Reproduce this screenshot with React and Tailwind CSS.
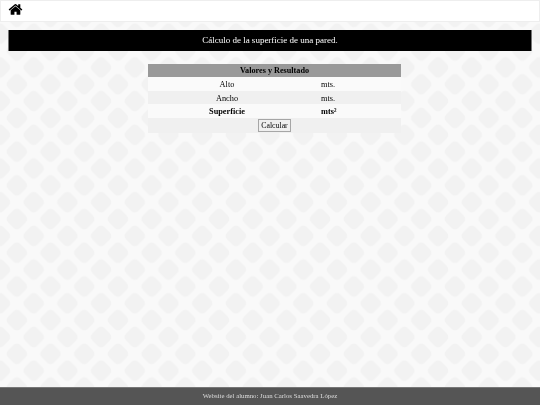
const serif = "font-['Liberation_Serif',serif]";

const Wallpaper = () => (
  <svg className="absolute -left-[3px] -top-[3px] w-[546px] h-[411px] blur-[0.5px]" aria-hidden="true">
    <defs>
      <pattern id="rombos" width="33.7" height="33.7" patternUnits="userSpaceOnUse" patternTransform="translate(3 3)">
        <rect width="33.7" height="33.7" fill="#f9f9f9" />
        <g fill="#f2f2f2">
          <rect x="8.35" y="8.35" width="17" height="17" rx="4.5" transform="rotate(45 16.85 16.85)" />
          <rect x="-8.5" y="-8.5" width="17" height="17" rx="4.5" transform="rotate(45 0 0)" />
          <rect x="25.2" y="-8.5" width="17" height="17" rx="4.5" transform="rotate(45 33.7 0)" />
          <rect x="-8.5" y="25.2" width="17" height="17" rx="4.5" transform="rotate(45 0 33.7)" />
          <rect x="25.2" y="25.2" width="17" height="17" rx="4.5" transform="rotate(45 33.7 33.7)" />
        </g>
      </pattern>
    </defs>
    <rect width="100%" height="100%" fill="url(#rombos)" />
  </svg>
);

const HomeIcon = () => (
  <svg viewBox="0 0 1792 1792" className="w-[15px] h-[15px] fill-black">
    <path d="M1472 992v480q0 26-19 45t-45 19h-384v-384h-256v384h-384q-26 0-45-19t-19-45v-480q0-1 .5-3t.5-3l575-474 575 474q1 2 1 6zm223-69l-62 74q-8 9-21 11h-3q-13 0-21-7l-692-577-692 577q-12 8-24 7-13-2-21-11l-62-74q-8-10-7-23.5t11-21.5l719-599q32-26 76-26t76 26l244 204v-195q0-14 9-23t23-9h192q14 0 23 9t9 23v408l219 182q10 8 11 21.5t-7 23.5z" />
  </svg>
);

const Row = ({ label, unit, bold, bg }) => (
  <div className={`grid grid-cols-[158px_1fr] h-[13.5px] pt-[2px] items-center text-[8.3px] text-black ${bg} ${bold ? "font-bold" : ""}`}>
    <span className="text-center">{label}</span>
    <span className="pl-[15px]">{unit}</span>
  </div>
);

export default function App() {
  return (
    <div className={`relative h-screen overflow-hidden flex flex-col blur-[0.3px] ${serif}`}>
      <Wallpaper />

      <header className="relative h-[22px] shrink-0 bg-white border border-[#eeeeee] pl-[6.5px] pt-[1.2px] flex items-start">
        <HomeIcon />
      </header>

      <h1 className="relative mt-[8px] mx-[8px] h-[21px] bg-black border-l border-r border-[#777777] text-white text-[9px] font-normal flex items-center justify-center">
        Cálculo de la superficie de una pared.
      </h1>

      <main className="relative mt-[12.5px] ml-[148px] w-[253px]">
        <div className="h-[13.5px] pt-[1px] bg-[#999999] text-[8.2px] font-bold text-black flex items-center justify-center">
          Valores y Resultado
        </div>
        <Row label="Alto" unit="mts." bg="bg-[#fafafa]" />
        <Row label="Ancho" unit="mts." bg="bg-[#f0f0f0]" />
        <Row label="Superficie" unit="mts²" bold bg="bg-[#fafafa]" />
        <div className="h-[15px] bg-[#f0f0f0] flex items-center justify-center">
          <button className="h-[13px] w-[33px] bg-[#efefef] border border-[#a6a6a6] text-[7.8px] text-black">
            Calcular
          </button>
        </div>
      </main>

      <footer className="relative mt-auto h-[18px] shrink-0 bg-[#555555] border-t border-[#777777] text-[#dddddd] text-[6.8px] flex items-center justify-center">
        Website del alumno: Juan Carlos Saavedra López
      </footer>
    </div>
  );
}
